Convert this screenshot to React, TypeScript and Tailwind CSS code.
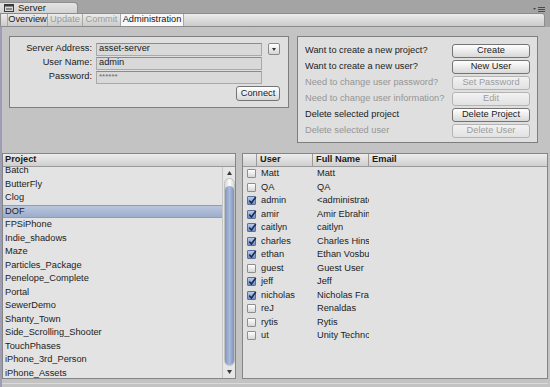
import React from "react";

const projects = [
  "Batch",
  "ButterFly",
  "Clog",
  "DOF",
  "FPSiPhone",
  "Indie_shadows",
  "Maze",
  "Particles_Package",
  "Penelope_Complete",
  "Portal",
  "SewerDemo",
  "Shanty_Town",
  "Side_Scrolling_Shooter",
  "TouchPhases",
  "iPhone_3rd_Person",
  "iPhone_Assets",
];

const users: [string, string, boolean][] = [
  ["Matt", "Matt", false],
  ["QA", "QA", false],
  ["admin", "<administrator>", true],
  ["amir", "Amir Ebrahimi", true],
  ["caitlyn", "caitlyn", true],
  ["charles", "Charles Hinshaw", true],
  ["ethan", "Ethan Vosburgh", true],
  ["guest", "Guest User", false],
  ["jeff", "Jeff", true],
  ["nicholas", "Nicholas Francis", true],
  ["reJ", "Renaldas", false],
  ["rytis", "Rytis", false],
  ["ut", "Unity Technologies", false],
];

function Check({ on }: { on: boolean }) {
  if (!on)
    return (
      <div className="w-[9px] h-[9px] border border-[#8e8e8e] rounded-[1px] bg-gradient-to-b from-white to-[#d6d6d6]" />
    );
  return (
    <div className="relative w-[9px] h-[9px] border border-[#5b6f98] rounded-[1px] bg-gradient-to-b from-[#b9cbeb] to-[#6d8cc6]">
      <svg className="absolute left-[0px] top-[-1px]" width="9" height="9" viewBox="0 0 9 9">
        <path d="M1.2 4.6 L3.4 7 L7.8 1" fill="none" stroke="#1b2748" strokeWidth="1.5" />
      </svg>
    </div>
  );
}

function Btn({ label, disabled, w }: { label: string; disabled?: boolean; w: string }) {
  return (
    <div
      className={
        disabled
          ? `${w} h-[14px] rounded-[3px] border border-[#b4b4b4] bg-gradient-to-b from-[#f2f2f2] to-[#e2e2e2] text-[#9c9c9c] flex items-center justify-center`
          : `${w} h-[14px] rounded-[3px] border border-[#747474] bg-gradient-to-b from-white to-[#d8d8d8] text-[#1c1c1c] flex items-center justify-center`
      }
    >
      {label}
    </div>
  );
}

function Field({ children }: { children?: React.ReactNode }) {
  return (
    <div className="w-[166px] h-[13px] bg-[#d9d9d9] border border-[#a9a9a9] border-t-[#8a8a8a] flex items-center pl-[2px]">
      {children}
    </div>
  );
}

export default function App() {
  return (
    <div className="w-[550px] h-[387px] overflow-hidden bg-[#c3c3c3] flex flex-col font-['Liberation_Sans',Arial,sans-serif] text-[9.25px] text-[#1c1c1c] leading-none">
      {/* title strip */}
      <div className="h-[13px] bg-[#a4a4a4] flex items-end shrink-0">
        <div className="h-[11px] w-[78px] bg-gradient-to-b from-[#e4e4e4] to-[#d2d2d2] rounded-tr-[4px] border-r border-t border-[#8e8e8e] flex items-center pl-[4px] gap-[4px] text-[9.5px] text-[#222]">
          <svg width="10" height="8" viewBox="0 0 10 8">
            <rect x="0.5" y="0.5" width="9" height="7" fill="#d8d8d8" stroke="#3a3a3a" />
            <rect x="0.5" y="0.5" width="9" height="2" fill="#3a3a3a" />
            <line x1="2" y1="5" x2="8" y2="5" stroke="#3a3a3a" />
          </svg>
          <span>Server</span>
        </div>
        <div className="ml-auto mr-[5px] mb-[1px] flex items-center gap-[1px]">
          <svg width="12" height="5" viewBox="0 0 12 5">
            <path d="M0 1 L3 1 L1.5 3 Z" fill="#4a4a4a" />
            <rect x="5" y="0" width="7" height="1" fill="#4a4a4a" />
            <rect x="5" y="2" width="7" height="1" fill="#4a4a4a" />
            <rect x="5" y="4" width="7" height="1" fill="#4a4a4a" />
          </svg>
        </div>
      </div>

      {/* toolbar */}
      <div className="h-[14px] shrink-0 bg-[#a4a4a4] flex">
        <div className="flex-1 mr-[5px] rounded-tr-[3px] border border-[#8c8c8c] bg-gradient-to-b from-[#ececec] to-[#cbcbcb] flex items-stretch pl-[6px]">
          <div className="flex items-center border-x border-[#a8a8a8] text-[#202020] w-[41px] justify-center">Overview</div>
          <div className="flex items-center border-r border-[#a8a8a8] text-[#9a9a9a] w-[35px] justify-center">Update</div>
          <div className="flex items-center border-r border-[#a8a8a8] text-[#9a9a9a] w-[38px] justify-center">Commit</div>
          <div className="flex items-center bg-[#f8f8f8] border-r border-[#a8a8a8] text-[#151515] w-[63px] justify-center">Administration</div>
        </div>
      </div>

      {/* body */}
      <div className="flex-1 flex flex-col border-l-2 border-[#9d9db6]">
        <div className="flex items-start gap-[8px] pl-[7px] pt-[9px]">
          {/* Server box */}
          <div className="w-[280px] h-[72px] bg-[#dfdfdf] border border-[#7e7e7e] flex flex-col pt-[5px]">
            <div className="flex items-center h-[14px]">
              <div className="w-[82px] text-right">Server Address:</div>
              <div className="ml-[4px]">
                <Field>asset-server</Field>
              </div>
              <div className="ml-[6px] w-[12px] h-[12px] border border-[#8a8a8a] rounded-[2px] bg-gradient-to-b from-white to-[#d6d6d6] flex items-center justify-center">
                <svg width="4" height="3" viewBox="0 0 4 3">
                  <path d="M0 0 L4 0 L2 3 Z" fill="#333" />
                </svg>
              </div>
            </div>
            <div className="flex items-center h-[14px]">
              <div className="w-[82px] text-right">User Name:</div>
              <div className="ml-[4px]">
                <Field>admin</Field>
              </div>
            </div>
            <div className="flex items-center h-[14px]">
              <div className="w-[82px] text-right">Password:</div>
              <div className="ml-[4px]">
                <Field>
                  <span className="text-[8px] text-[#6a6a6a]">******</span>
                </Field>
              </div>
            </div>
            <div className="flex justify-end pr-[8px] mt-[2px]">
              <div className="w-[44px] h-[15px] rounded-[3px] border border-[#747474] bg-gradient-to-b from-white to-[#d8d8d8] flex items-center justify-center">
                Connect
              </div>
            </div>
          </div>

          {/* Admin box */}
          <div className="w-[241px] h-[107px] bg-[#dfdfdf] border border-[#7e7e7e] flex flex-col pt-[6px]">
            {[
              ["Want to create a new project?", "Create", false],
              ["Want to create a new user?", "New User", false],
              ["Need to change user password?", "Set Password", true],
              ["Need to change user information?", "Edit", true],
              ["Delete selected project", "Delete Project", false],
              ["Delete selected user", "Delete User", true],
            ].map(([l, b, d]) => (
              <div key={b as string} className="flex items-center h-[16px] pl-[7px] pr-[7px]">
                <div className={d ? "flex-1 text-[#959595]" : "flex-1 text-[#1c1c1c]"}>{l as string}</div>
                <Btn label={b as string} disabled={d as boolean} w="w-[78px]" />
              </div>
            ))}
          </div>
        </div>

        {/* lists */}
        <div className="flex gap-[6px] mt-[10px] h-[226px] mr-[2px]">
          {/* project list */}
          <div className="w-[234px] border border-[#858585] bg-[#e3e3e3] flex flex-col">
            <div className="h-[13px] shrink-0 bg-gradient-to-b from-[#ededed] to-[#cfcfcf] border-b border-[#9a9a9a] flex items-center pl-[2px] font-bold">
              Project
            </div>
            <div className="flex-1 flex overflow-hidden">
              <div className="flex-1 overflow-hidden">
                <div className="mt-[-3px]">
                  {projects.map((p) => (
                    <div
                      key={p}
                      className={
                        p === "DOF"
                          ? "h-[13.5px] flex items-center pl-[2px] bg-gradient-to-b from-[#b9c6de] to-[#9cadcb] border-y border-[#8d9dbb]"
                          : "h-[13.5px] flex items-center pl-[2px]"
                      }
                    >
                      {p}
                    </div>
                  ))}
                </div>
              </div>
              {/* scrollbar */}
              <div className="w-[13px] shrink-0 bg-[#e6e6e6] border-l border-[#c4c4c4] flex flex-col items-center">
                <div className="h-[11px] flex items-center justify-center">
                  <svg width="5" height="4" viewBox="0 0 5 4">
                    <path d="M0 4 L5 4 L2.5 0 Z" fill="#3a3a3a" />
                  </svg>
                </div>
                <div className="flex-1 w-[11px] rounded-full bg-gradient-to-r from-[#d8d8d8] via-[#fbfbfb] to-[#d8d8d8] border border-[#c0c0c0] flex flex-col pt-[7px]">
                  <div className="flex-1 rounded-full bg-gradient-to-r from-[#8196bd] via-[#a9bcdc] to-[#7e93bb]" />
                </div>
                <div className="h-[12px] flex items-center justify-center">
                  <svg width="5" height="4" viewBox="0 0 5 4">
                    <path d="M0 0 L5 0 L2.5 4 Z" fill="#3a3a3a" />
                  </svg>
                </div>
              </div>
            </div>
          </div>

          {/* user list */}
          <div className="flex-1 border border-[#858585] bg-[#e1e1e1] flex flex-col">
            <div className="h-[13px] shrink-0 bg-gradient-to-b from-[#ededed] to-[#cfcfcf] border-b border-[#9a9a9a] flex items-stretch font-bold">
              <div className="w-[14px] border-r border-[#9a9a9a]" />
              <div className="w-[56px] border-r border-[#9a9a9a] flex items-center pl-[3px]">User</div>
              <div className="w-[56px] border-r border-[#9a9a9a] flex items-center pl-[3px]">Full Name</div>
              <div className="flex-1 flex items-center pl-[3px]">Email</div>
            </div>
            <div className="flex-1 overflow-hidden">
              {users.map(([u, f, c]) => (
                <div key={u} className="h-[13.5px] flex items-center">
                  <div className="w-[14px] flex items-center justify-center pl-[3px]">
                    <Check on={c} />
                  </div>
                  <div className="w-[56px] pl-[4px] whitespace-nowrap overflow-hidden">{u}</div>
                  <div className="w-[56px] pl-[4px] whitespace-nowrap overflow-hidden">{f}</div>
                </div>
              ))}
            </div>
          </div>
        </div>
        <div className="mt-[4px] h-px bg-[#dadada] mr-[2px]" />
      </div>
    </div>
  );
}
